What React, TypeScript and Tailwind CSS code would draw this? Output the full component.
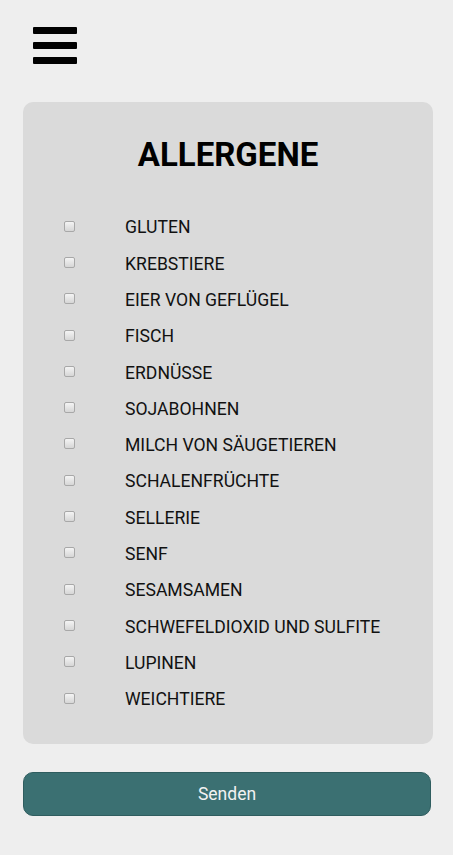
import { useState } from "react";

const allergene = [
  "GLUTEN",
  "KREBSTIERE",
  "EIER VON GEFLÜGEL",
  "FISCH",
  "ERDNÜSSE",
  "SOJABOHNEN",
  "MILCH VON SÄUGETIEREN",
  "SCHALENFRÜCHTE",
  "SELLERIE",
  "SENF",
  "SESAMSAMEN",
  "SCHWEFELDIOXID UND SULFITE",
  "LUPINEN",
  "WEICHTIERE",
];

const App = () => {
  const [checked, setChecked] = useState<Record<string, boolean>>({});

  return (
    <div className="min-h-screen w-full bg-[#eeeeee] pl-[23px] pr-[20px] pt-[27px] pb-10 font-['Roboto',_'Noto_Sans',_sans-serif]">
      {/* Menü */}
      <button className="ml-[10px] flex w-[44px] flex-col gap-[8px]" aria-label="Menü">
        <span className="h-[7px] w-full rounded-[1px] bg-black"></span>
        <span className="h-[7px] w-full rounded-[1px] bg-black"></span>
        <span className="h-[7px] w-full rounded-[1px] bg-black"></span>
      </button>

      {/* Allergene */}
      <div className="mt-[38px] w-[410px] rounded-[10px] bg-[#dadada] pt-[33px] pb-[26px]">
        <h1 className="text-center text-[33px] font-bold leading-[40px] text-black">ALLERGENE</h1>
        <ul className="mt-[35px] flex flex-col">
          {allergene.map((name) => (
            <li key={name} className="flex h-[36.3px] items-center pl-[41px]">
              <input
                type="checkbox"
                checked={!!checked[name]}
                onChange={() => setChecked({ ...checked, [name]: !checked[name] })}
                className="mb-[4px] h-[11px] w-[11px] shrink-0 appearance-none rounded-[2px] border border-[#a8a8a8] bg-gradient-to-b from-[#f4f4f4] to-[#d6d6d6] checked:bg-[#3b7072]"
              />
              <span className="ml-[50px] text-[17.6px] leading-none text-[#111111]">{name}</span>
            </li>
          ))}
        </ul>
      </div>

      <button className="mt-[28px] flex h-[44px] w-[408px] items-center justify-center rounded-[10px] border border-[#2f5d5f] bg-[#3b7072] text-[17.5px] text-[#f2f2f2]">
        Senden
      </button>
    </div>
  );
};

export default App;
